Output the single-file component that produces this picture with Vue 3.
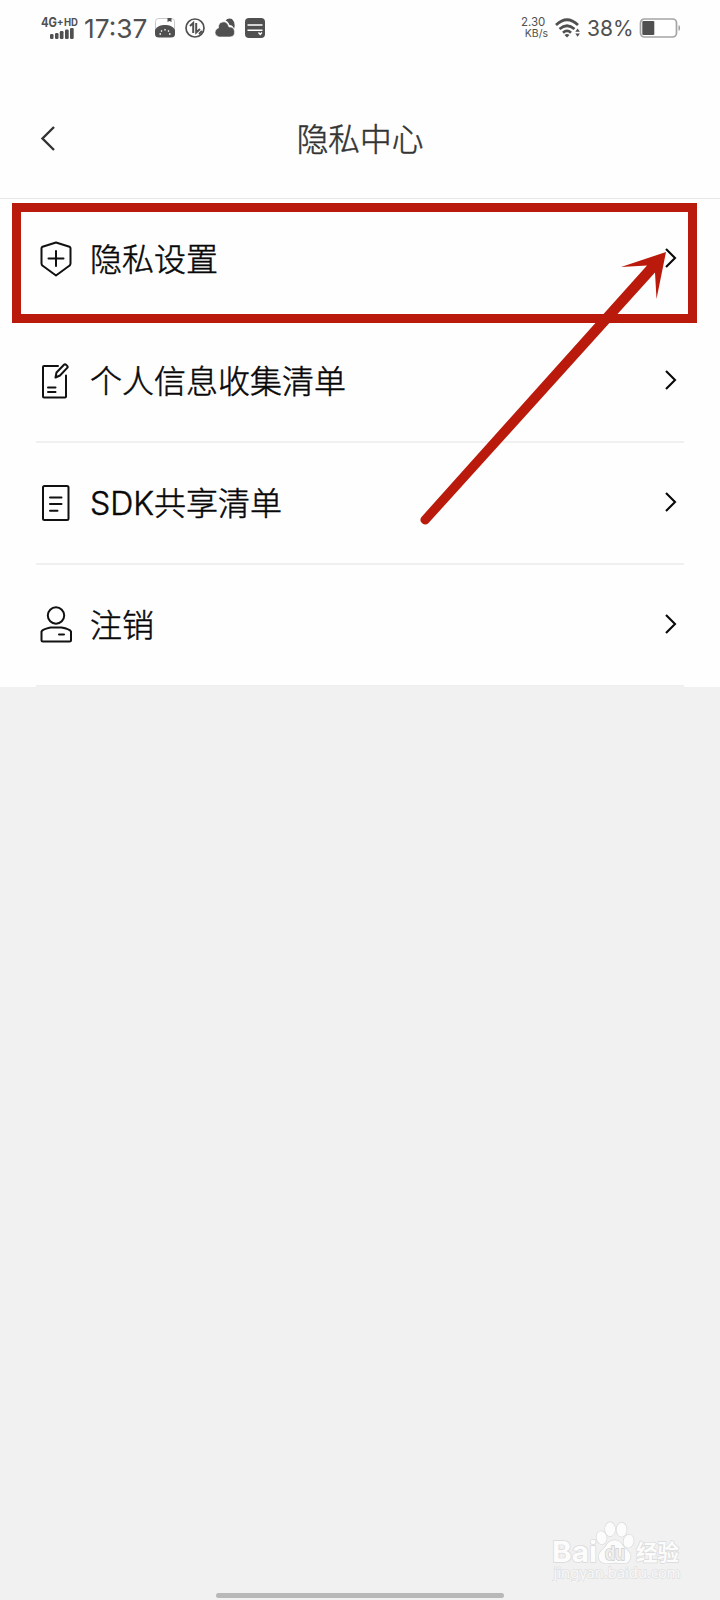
<script setup>
const rows = [
  { icon: 'shield', label: '隐私设置' },
  { icon: 'edit', label: '个人信息收集清单' },
  { icon: 'list', label: 'SDK共享清单' },
  { icon: 'user', label: '注销' },
]
</script>

<template>
  <div class="screen">
    <header class="status">
      <svg class="signal" width="40" height="24" viewBox="0 0 40 24">
        <text x="0" y="10.500" font-size="12.500" textLength="16" lengthAdjust="spacingAndGlyphs">4G</text>
        <text x="15.800" y="8.500" font-size="10">+</text>
        <text x="23" y="9.500" font-size="10" textLength="14" lengthAdjust="spacingAndGlyphs">HD</text>
        <g class="bars">
          <rect x="9" y="18" width="3.500" height="5" rx="1.200" />
          <rect x="14" y="17" width="3.500" height="6" rx="1.200" />
          <rect x="18.800" y="15" width="3.700" height="8" rx="1.200" />
          <rect x="24" y="13.500" width="3.700" height="9.500" rx="1.200" />
          <rect x="29" y="12" width="3.700" height="11" rx="1.200" />
        </g>
      </svg>
      <span class="time">17:37</span>
      <div class="apps">
        <svg width="20" height="20" viewBox="0 0 20 20">
          <rect x=".5" y=".5" width="19" height="18" rx="3" fill="#fff" stroke="#bbb" stroke-width=".8" />
          <path d="M12.500 0h4v4l-2-1-2 1z" />
          <path d="M0 12C2 8 6 7 10 7s8 1 10 5v4q0 3.500-4 3.500H4Q0 19.500 0 16z" />
          <path d="M4.500 16h1.500M6 12.500l1 1M10 11v1.500M14 12.500l-1 1M15.500 16H14" stroke="#fff" stroke-width="1.300" />
        </svg>
        <svg width="20" height="20" viewBox="0 0 20 20">
          <circle cx="10" cy="10" r="9" fill="none" stroke="#505050" stroke-width="1.700" />
          <path d="M5 8l3.200-3v10M11.200 5v9.500L15 11M14 16l3-3" fill="none" stroke="#505050" stroke-width="2" />
        </svg>
        <svg width="20" height="20" viewBox="0 0 20 20">
          <path d="M10.500 2.500Q13-.5 17 1q4 4 2 10-1-4-4.500-4Q13 3 10.500 2.500z" />
          <path d="M4 19Q0 18 0 14.500T3.500 10Q3 5 7.500 4t6.500 5q5-.5 5.500 4.500T15 19z" stroke="#fff" stroke-width=".6" />
        </svg>
        <svg width="20" height="20" viewBox="0 0 20 20">
          <rect width="20" height="20" rx="4" />
          <path d="M2.500 7h15M2.500 12.300h15" stroke="#fff" stroke-width="1.500" />
          <path d="M13.500 14.500l1.700 2 1.700-2" fill="none" stroke="#fff" stroke-width="1.400" />
        </svg>
      </div>
      <div class="speed"><span>2.30</span><span>KB/s</span></div>
      <svg class="wifi" width="26" height="20" viewBox="0 0 26 20">
        <path d="M1 7Q12 -3.500 23 7M4.500 11Q12 4.500 19.500 11M8 14.700Q12 11 16 14.700" fill="none" stroke="#505050" stroke-width="2.700" />
        <path d="M9.500 17q2.500-2 5 0L12 19.500z" />
        <path d="M20.300 13.800l2.300-3.300 2.300 3.300zM20.300 15.500l2.300 3.300 2.300-3.300z" />
      </svg>
      <span class="pct">38%</span>
      <svg width="41" height="20" viewBox="0 0 41 20">
        <rect x="1.500" y="1" width="36" height="18" rx="4" fill="#fff" stroke="#a5a5a5" stroke-width="1.700" />
        <rect x="3.300" y="3" width="12" height="14" rx="1" />
        <path d="M39.500 7.500h1q1 2.500 0 5h-1z" fill="#999" />
      </svg>
    </header>

    <nav class="titlebar">
      <svg class="back" width="20" height="30" viewBox="0 0 20 30">
        <path d="M15 4L3.500 15.500 15 27" />
      </svg>
      <h1>隐私中心</h1>
    </nav>

    <main class="list">
      <div v-for="row in rows" :key="row.icon" class="row">
        <svg class="icon" width="36" height="40" viewBox="0 0 36 40">
          <template v-if="row.icon === 'shield'">
            <path d="M18 3.500L31.500 7.800q1 .4 1 1.500V24.500q0 1.500-1.200 2.300L18 36.500 4.700 26.800Q3.500 26 3.500 24.500V9.300q0-1.100 1-1.500z" />
            <path d="M18 12v15M10.500 19.500h15" />
          </template>
          <template v-else-if="row.icon === 'edit'">
            <path d="M20 5H6q-1 0-1 1v29.500q0 1 1 1h21q1 0 1-1V14.500" />
            <path d="M17.500 16.500l1-5L26 3.700q1-1 2 0l1.200 1.200q1 1 0 2L22 14.500zM10 26.500h7.500M10 31h7.500" />
          </template>
          <template v-else-if="row.icon === 'list'">
            <rect x="5" y="3" width="25.500" height="34" rx="1.500" />
            <path d="M12 14.500h11.500M12 21h11.500M12 27.800h7.500" />
          </template>
          <template v-else>
            <circle cx="18" cy="10.500" r="8.200" />
            <path d="M12.500 22.500h11q8 1.500 9.500 4V35q0 1.500-1.500 1.500H5Q3.500 36.500 3.500 35v-8.500q1.500-2.500 9-4zM21 29.500h5" />
          </template>
        </svg>
        <span class="label">{{ row.label }}</span>
        <svg class="chevron" width="14" height="24" viewBox="0 0 14 24">
          <path d="M2 2L11 11 2 20" />
        </svg>
      </div>
    </main>

    <svg class="annotation" width="720" height="540" viewBox="0 0 720 540">
      <rect x="16.500" y="207.500" width="676" height="111" fill="none" stroke="#ba1a0c" stroke-width="9" />
      <path d="M666 252L621 267 647 265.500 421.300 517.200A4.700 4.700 0 0 0 428.300 523.300L655 272.500 656.500 299z" fill="#ba1a0c" />
    </svg>

    <svg class="watermark" width="150" height="66" viewBox="0 0 150 66">
      <g class="mark">
        <text x="0" y="46" font-size="28" font-weight="700" textLength="45" lengthAdjust="spacingAndGlyphs">Bai</text>
        <g transform="translate(-1.900 .7)">
          <ellipse cx="51.500" cy="21" rx="5" ry="6.500" transform="rotate(-12 51.500 21)" />
          <ellipse cx="60" cy="12.500" rx="5" ry="7" />
          <ellipse cx="71.500" cy="13" rx="5" ry="7" />
          <ellipse cx="78.500" cy="24.500" rx="5" ry="6.500" transform="rotate(12 78.500 24.500)" />
          <path d="M64.500 23.500c6 0 7 4.500 10.500 8 4 3.500 6.500 6 5 10.500-2.500 7-9 4-15.500 4s-13 2.500-15.500-4c-1.500-5 2-7.500 5.500-11 3-3.500 4-7.500 10-7.500z" />
        </g>
        <text class="du" x="53" y="43.500" font-size="19" font-weight="700" textLength="20" lengthAdjust="spacingAndGlyphs">du</text>
        <text class="cjk" x="84" y="44" font-size="22" font-weight="700" textLength="43" lengthAdjust="spacingAndGlyphs">经验</text>
        <text class="url" x="1.500" y="62" font-size="15" textLength="127" lengthAdjust="spacingAndGlyphs">jingyan.baidu.com</text>
      </g>
    </svg>
    <div class="home"></div>
  </div>
</template>

<style>
html,
body {
  background: #f1f1f1;
}
</style>

<style scoped>
.screen {
  position: relative;
  width: 720px;
  height: 1600px;
  overflow: hidden;
  background: #f1f1f1;
  font-family: Inter, "Noto Sans CJK SC", sans-serif;
}
svg {
  display: block;
  flex: none;
}
.status {
  box-sizing: border-box;
  height: 78px;
  padding: 0 40px 22px 41px;
  display: flex;
  align-items: center;
  background: #fefefe;
  color: #505050;
  fill: #505050;
}
.signal {
  font-weight: 700;
}
.time {
  width: 70px;
  margin-left: 3px;
  padding-top: 1px;
  font-size: 26.3px;
  line-height: 30px;
  white-space: nowrap;
}
.apps {
  display: flex;
  gap: 10px;
  margin-left: 1px;
}
.speed {
  display: flex;
  flex-direction: column;
  align-items: flex-start;
  margin-left: auto;
  width: 27px;
  font-size: 11px;
  line-height: 11px;
}
.speed span:first-child {
  font-size: 11.5px;
}
.speed span:last-child {
  align-self: flex-end;
  font-size: 10.5px;
}
.wifi {
  margin: 0 6px 0 7px;
}
.pct {
  width: 45px;
  margin-right: 7px;
  padding-top: 1px;
  font-size: 21px;
  line-height: 26px;
  white-space: nowrap;
}
.titlebar {
  box-sizing: border-box;
  height: 121px;
  display: grid;
  grid-template-columns: 58px 1fr 58px;
  align-items: center;
  border-bottom: 1px solid #e6e8ea;
  background: #fefefe;
}
.back {
  margin-left: 39px;
  fill: none;
  stroke: #333;
  stroke-width: 2.4;
}
h1 {
  margin: 0;
  padding-top: 4px;
  color: #333;
  font-size: 31.7px;
  font-weight: 300;
  line-height: 44px;
  text-align: center;
  -webkit-text-stroke: 0.5px #333;
}
.list {
  background: #fefefe;
  padding: 0 36px;
}
.row {
  box-sizing: border-box;
  height: 122px;
  padding: 0 6px 1px 2px;
  display: flex;
  align-items: center;
  border-bottom: 2px solid #f0f0f0;
}
.icon {
  fill: none;
  stroke: #111;
  stroke-width: 2;
  stroke-linecap: round;
  stroke-linejoin: round;
}
.label {
  margin-left: 16px;
  padding-top: 3px;
  color: #080808;
  font-size: 32px;
  font-weight: 300;
  line-height: 44px;
  -webkit-text-stroke: 0.5px #080808;
}
.chevron {
  margin-left: auto;
  fill: none;
  stroke: #080808;
  stroke-width: 2.1;
}
.annotation {
  position: absolute;
  top: 0;
  left: 0;
}
.watermark {
  position: absolute;
  left: 552px;
  top: 1516px;
}
.mark {
  fill: #fcfcfc;
  stroke: #dadada;
  stroke-width: 1.4;
  paint-order: stroke;
}
.du {
  fill: #eee;
  stroke: #ccc;
}
.cjk {
  font-family: "Noto Sans CJK SC", sans-serif;
}
.url {
  font-family: "Noto Sans", sans-serif;
  fill: #f8f8f8;
  stroke: #e0e0e0;
}
.home {
  position: absolute;
  left: 216px;
  bottom: 2px;
  width: 288px;
  height: 5px;
  border-radius: 3px;
  background: #b8b8b8;
}
</style>
